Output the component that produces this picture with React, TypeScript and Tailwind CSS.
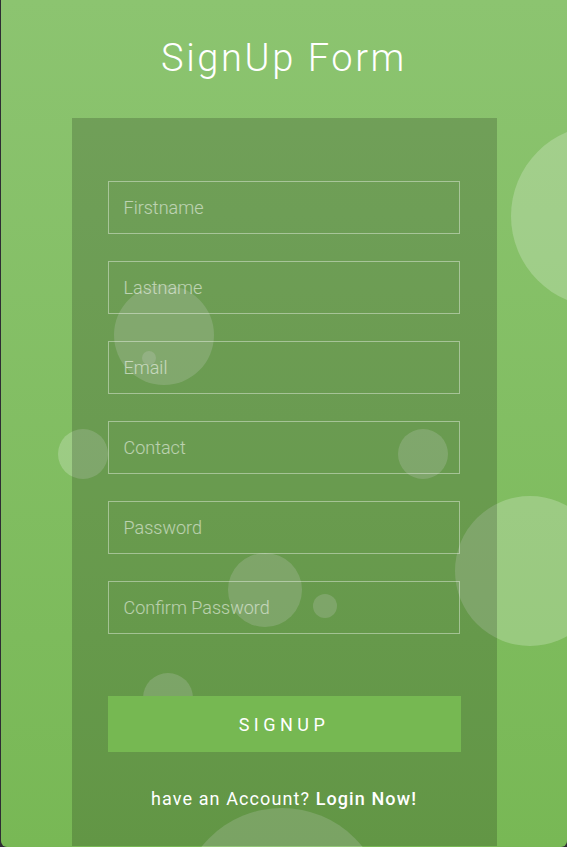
import type { ReactNode } from 'react';

const fields = ['Firstname', 'Lastname', 'Email', 'Contact', 'Password', 'Confirm Password'];

// decorative bubbles behind the form panel
const bubbles = [
  { x: 602, y: 216, r: 91 },
  { x: 164, y: 335, r: 50 },
  { x: 149, y: 358, r: 7 },
  { x: 83, y: 454, r: 25 },
  { x: 423, y: 454, r: 25 },
  { x: 530, y: 571, r: 75 },
  { x: 265, y: 590, r: 37 },
  { x: 325, y: 606, r: 12 },
  { x: 168, y: 698, r: 25 },
  { x: 282, y: 911, r: 103 },
];

function Field({ label }: { label: string }): ReactNode {
  return (
    <input
      type="text"
      placeholder={label}
      className="block w-[352px] h-[53px] border border-white/40 bg-transparent px-[15px] text-[18px] font-light text-white outline-none placeholder:text-white/55"
    />
  );
}

export default function App() {
  return (
    <div className="min-h-[847px] bg-[#2e2d33] pl-[1px]" style={{ fontFamily: 'Roboto, "Open Sans", sans-serif' }}>
      <div className="relative h-[847px] overflow-hidden rounded-b-[6px] bg-gradient-to-b from-[#8cc470] to-[#78b855]">
        {/* bubbles */}
        <div className="absolute inset-0 z-0">
          {bubbles.map((b, i) => (
            <div
              key={i}
              className="absolute rounded-full bg-white/[0.22]"
              style={{ left: b.x - b.r - 1, top: b.y - b.r, width: b.r * 2, height: b.r * 2 }}
            />
          ))}
        </div>

        <div className="relative z-10 flex flex-col items-center">
          <h1 className="pt-[35px] h-[118px] text-[38px] font-light leading-[46px] tracking-[2.6px] text-white">
            SignUp Form
          </h1>

          <div className="w-[425px] h-[728px] bg-black/[0.18] px-[36px] pt-[63px]">
            <div className="flex flex-col gap-[27px]">
              {fields.map(f => (
                <Field key={f} label={f} />
              ))}
            </div>

            <button className="mt-[62px] block w-[353px] h-[56px] bg-[#76b852] text-[18px] font-normal tracking-[4.5px] text-white">
              SIGNUP
            </button>

            <p className="mt-[33px] text-center text-[18px] tracking-[1.1px] text-white">
              have an Account? <span className="font-medium">Login Now!</span>
            </p>
          </div>
        </div>
      </div>
    </div>
  );
}
